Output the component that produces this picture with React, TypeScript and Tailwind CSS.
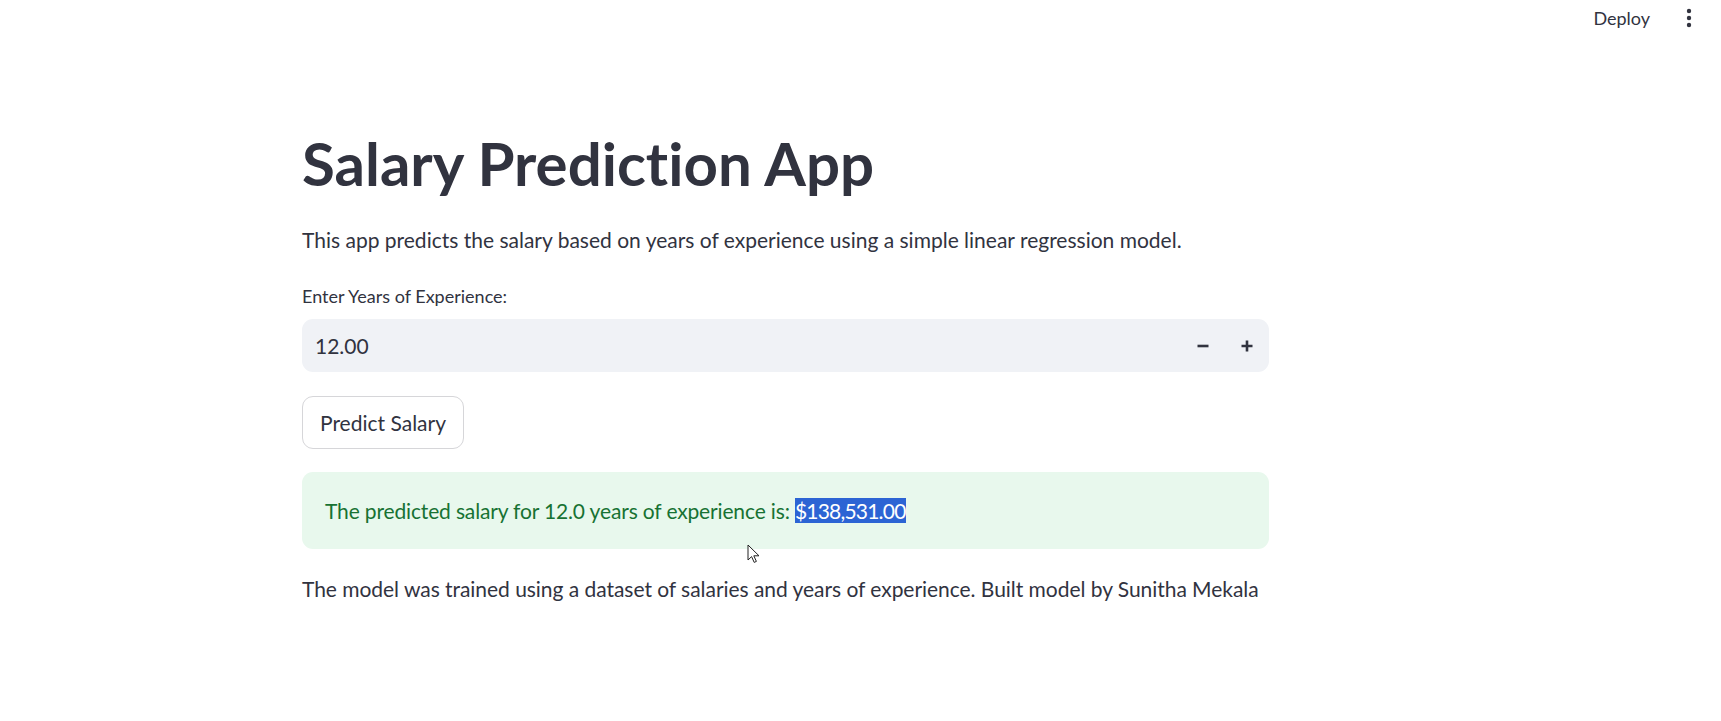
import { useState } from "react";

const font = { fontFamily: "Lato, 'Noto Sans', sans-serif" };

const KebabIcon = () => (
  <svg width="6" height="20" viewBox="0 0 6 20" fill="#31333f">
    <circle cx="3" cy="3" r="2.2" />
    <circle cx="3" cy="10" r="2.2" />
    <circle cx="3" cy="17" r="2.2" />
  </svg>
);

const MinusIcon = () => (
  <svg width="12" height="12" viewBox="0 0 12 12">
    <path d="M0.5 6h11" stroke="#31333f" strokeWidth="2.6" />
  </svg>
);

const PlusIcon = () => (
  <svg width="12" height="12" viewBox="0 0 12 12">
    <path d="M0.5 6h11M6 0.5v11" stroke="#31333f" strokeWidth="2.6" />
  </svg>
);

const Cursor = () => (
  <svg width="14" height="20" viewBox="0 0 14 20">
    <path
      d="M1 1v15l3.6-3.4 2.6 5.8 2.2-1-2.6-5.6H12z"
      fill="#fff"
      stroke="#222"
      strokeWidth="1"
      strokeLinejoin="round"
    />
  </svg>
);

export default function App() {
  const [years] = useState("12.00");

  return (
    <div
      className="relative min-h-[721px] bg-white text-[#31333f] [font-variant-ligatures:none]"
      style={font}
    >
      <header className="h-[35px] flex items-center justify-end">
        <button className="text-[18px] leading-none text-[#31333f] mr-[36px]">
          Deploy
        </button>
        <div className="mr-[29px] flex items-center">
          <KebabIcon />
        </div>
      </header>

      <main className="ml-[302px] w-[967px] flex flex-col">
        <h1 className="mt-[92px] text-[60px] leading-[72px] font-bold">
          Salary Prediction App
        </h1>

        <p className="mt-[28px] text-[21px] leading-[25px]">
          This app predicts the salary based on years of experience using a simple linear
          regression model.
        </p>

        <label className="mt-[33px] text-[18px] leading-[22px]">
          Enter Years of Experience:
        </label>

        <div className="mt-[12px] h-[53px] rounded-[11px] bg-[#f0f2f6] flex items-center pl-[13px] pr-[16px]">
          <span className="flex-1 text-[21px]">{years}</span>
          <div className="flex items-center gap-[32px]">
            <MinusIcon />
            <PlusIcon />
          </div>
        </div>

        <div className="mt-[24px]">
          <button className="h-[53px] w-[162px] rounded-[11px] border border-[#d6d6d9] bg-white text-[21px] text-[#31333f]">
            Predict Salary
          </button>
        </div>

        <div className="mt-[23px] h-[77px] rounded-[11px] bg-[#e8f8ed] flex items-center pl-[23px]">
          <p className="text-[21px] leading-[38px] text-[#177233] tracking-[-0.15px]">
            The predicted salary for 12.0 years of experience is:{" "}
            <span className="bg-[#2c64d4] text-white tracking-[-0.8px]">$138,531.00</span>
          </p>
        </div>

        <p className="mt-[27px] text-[21px] leading-[25px] tracking-[-0.04px]">
          The model was trained using a dataset of salaries and years of experience. Built model by
          Sunitha Mekala
        </p>
      </main>

      <div className="absolute left-[747px] top-[544px]">
        <Cursor />
      </div>
    </div>
  );
}
